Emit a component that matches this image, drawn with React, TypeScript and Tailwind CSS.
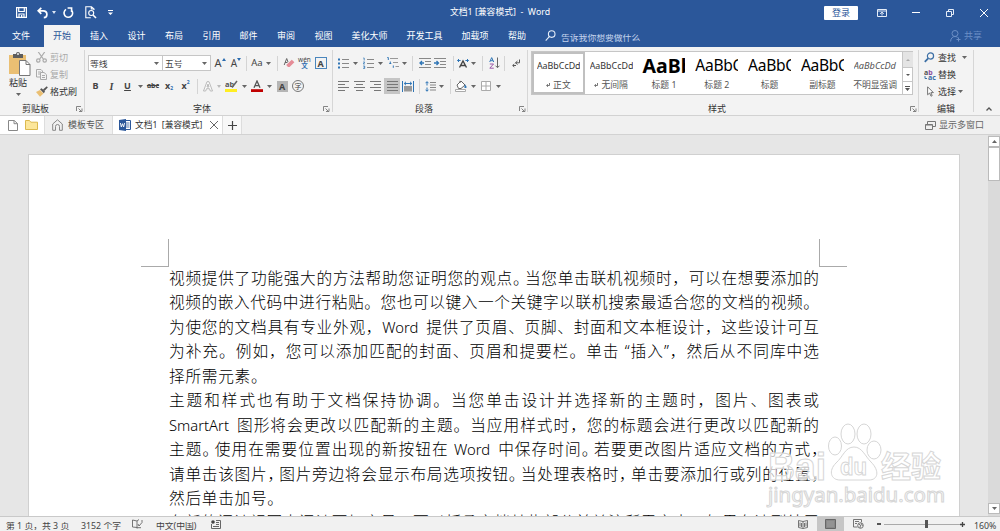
import React from "react";

type P = { className?: string; children?: React.ReactNode };

const Cell = ({ className = "", children }: P) => (
  <div className={"flex h-full shrink-0 items-center justify-center " + className}>{children}</div>
);

const Caret = ({ className = "" }: P) => (
  <Cell className={className}>
    <svg width="5" height="3" viewBox="0 0 5 3"><path d="M0 0h5L2.5 3z" fill="#666" /></svg>
  </Cell>
);

const Sep = ({ className = "" }: P) => (
  <Cell className={className}><div className="h-[15px] w-px bg-[#d4d4d4]" /></Cell>
);

const Launcher = () => (
  <svg width="7" height="6" viewBox="0 0 7 6" fill="none" stroke="#777" strokeWidth="0.9">
    <path d="M.5 5V.5h4.5M2.5 2.5l3 3M6 2.5v3H3" />
  </svg>
);

const GroupLabel = ({ className = "", children }: P) => (
  <div className={"flex h-[13px] shrink-0 items-center text-[9px] leading-[13px] text-[#333] " + className}>{children}</div>
);

const Divider = () => <div className="mt-[3px] h-[62px] w-px shrink-0 bg-[#d6d6d6]" />;

const tabs: [string, string][] = [
  ["插入", "w-[38px]"], ["设计", "w-[37px]"], ["布局", "w-[38px]"], ["引用", "w-[37px]"], ["邮件", "w-[37px]"],
  ["审阅", "w-[38px]"], ["视图", "w-[37px]"], ["美化大师", "w-[55px]"], ["开发工具", "w-[55px]"], ["加载项", "w-[46px]"], ["帮助", "w-[38px]"],
];

function TitleBar() {
  return (
    <div className="flex h-[25px] shrink-0 items-center text-white">
      <div className="flex w-[420px] items-center pl-4">
        <svg width="11" height="11" viewBox="0 0 11 11" fill="none" stroke="#fff" strokeWidth="1.2"><path d="M.6.6h9.8v9.8H.6zM2.7.8v3.7h5.6V.8M3 10.2V7h5v3.2" /><path d="M5 8h1.3v2H5z" fill="#fff" stroke="none" /></svg>
        <svg className="ml-2.5" width="11" height="12" viewBox="0 0 11 12" fill="none" stroke="#fff" strokeWidth="1.7"><path d="M4.3.8L1.2 3.8l3.1 3M1.5 3.8h4.7c4.8 0 4.8 6.6.6 6.8" /></svg>
        <svg className="ml-1" width="4" height="3" viewBox="0 0 4 3"><path d="M0 0h4L2 3z" fill="#dce6f5" /></svg>
        <svg className="ml-[7px]" width="11" height="12" viewBox="0 0 11 12" fill="none" stroke="#fff" strokeWidth="1.6"><path d="M3 2.4a4.3 4.3 0 1 0 5.2.4M4.6 1h4v4.1" /></svg>
        <svg className="ml-[11px]" width="12" height="13" viewBox="0 0 12 13" fill="none" stroke="#fff" strokeWidth="1.1"><path d="M9 4V3L6.5.7H.8v11h5M6.3.8V3H9" /><circle cx="6.2" cy="7" r="2.5" /><path d="M8 9l3 3" strokeWidth="1.6" /></svg>
        <svg className="ml-[11px]" width="5" height="6" viewBox="0 0 5 6" fill="#fff"><path d="M0 0h5v1H0zM0 2.5h5L2.5 5z" /></svg>
      </div>
      <div className="w-[160px] pl-[30px] text-[8.8px] whitespace-nowrap"><span>文档1 [兼容模式]</span><span>&nbsp; -&nbsp; Word</span></div>
      <div className="ml-[244px] flex h-3.5 w-[34px] items-center justify-center rounded-[1px] bg-white text-[9px] text-[#2b579a]">登录</div>
      <svg className="ml-[19px]" width="10" height="8" viewBox="0 0 10 8" fill="none" stroke="#e5edf8"><path d="M.5.5h9v7h-9zM.5 2h9M5 6.5V3.5M3.2 4.8L5 3.2l1.8 1.6" /></svg>
      <div className="ml-[25px] h-px w-2 bg-white" />
      <svg className="ml-[26px]" width="8" height="8" viewBox="0 0 8 8" fill="none" stroke="#e5edf8"><path d="M.5 2.5h5v5h-5zM2.5 2V.5h5v5H6" /></svg>
      <svg className="ml-[26px]" width="8" height="8" viewBox="0 0 8 8" stroke="#fff"><path d="M0 0l8 8M8 0L0 8" /></svg>
    </div>
  );
}

function TabRow() {
  return (
    <div className="flex h-[22px] shrink-0 text-[9px] text-white">
      <Cell className="w-[44px] pr-0.5">文件</Cell>
      <Cell className="w-9 bg-[#f3f3f3] text-[#2b579a]">开始</Cell>
      {tabs.map(([t, w]) => <Cell key={t} className={w}>{t}</Cell>)}
      <svg className="mt-[5px] ml-[9px]" width="11" height="12" viewBox="0 0 11 12" fill="none" stroke="#e5edf8" strokeWidth="1.1"><circle cx="6.7" cy="4.1" r="3.3" /><path d="M4.3 6.6L.7 10.6" /></svg>
      <div className="mt-[9px] ml-[5px] h-[8px] w-[80px] overflow-hidden text-[8.8px] leading-[8px] whitespace-nowrap text-[#c3d3ec]">告诉我你想要做什么</div>
      <div className="ml-auto flex items-center pr-[18px] text-[#6c8fc6]">
        <svg width="11" height="12" viewBox="0 0 11 12" fill="none" stroke="#6c8fc6"><circle cx="5" cy="3.5" r="3" /><path d="M.6 11.5C.6 8 3 6.5 5 6.5c1 0 2 .4 2.7 1M8.5 7.5v4M6.5 9.5h4" /></svg>
        <span className="ml-[3px]">共享</span>
      </div>
    </div>
  );
}

function Clipboard() {
  return (
    <div className="flex w-[84px] shrink-0 flex-col">
      <div className="flex h-[55px]">
        <div className="flex w-9 flex-col items-center pt-[5px] text-[9px] text-[#333]">
          <svg className="ml-1" width="22" height="24" viewBox="0 0 22 24"><path d="M0 3h17v19H0z" fill="#eabf73" /><path d="M4 2h3a2 2 0 0 1 4 0h3v4H4z" fill="#5d5d5d" /><circle cx="9" cy="2" r=".9" fill="#fff" /><path d="M10.5 8.5h6.5l4 4v11H10.5z" fill="#fff" stroke="#777" /><path d="M17 8.5v4h4" fill="none" stroke="#777" /></svg>
          <span className="leading-[13px]">粘贴</span>
          <svg className="mt-1" width="5" height="3" viewBox="0 0 5 3"><path d="M0 0h5L2.5 3z" fill="#666" /></svg>
        </div>
        <div className="flex flex-col pt-0.5 text-[9px] whitespace-nowrap">
          <div className="flex h-[17px] items-center text-[#a9a9a9]">
            <svg width="11" height="11" viewBox="0 0 11 11" fill="none" stroke="#aaa" strokeWidth="1.2"><path d="M2.3 0l5 7M8.7 0l-5 7" /><circle cx="2.3" cy="8.5" r="1.7" /><circle cx="8.7" cy="8.5" r="1.7" /></svg>
            <span className="ml-[3px]">剪切</span>
          </div>
          <div className="flex h-[17px] items-center text-[#a9a9a9]">
            <svg width="11" height="11" viewBox="0 0 11 11" fill="#f3f3f3" stroke="#aaa"><path d="M.5.5H5L6.5 2v6h-6zM2 3h3M2 5h3" /><path d="M4.5 3.5H8l2.5 2.2v4.8h-6zM6 6.5h3M6 8.5h3" /></svg>
            <span className="ml-[3px]">复制</span>
          </div>
          <div className="flex h-[17px] items-center text-[#333]">
            <svg width="12" height="11" viewBox="0 0 12 11"><path d="M0 6l4-2 3.5 3.5L4 10.8z" fill="#eabf73" /><path d="M4 3.2l1.6-1L9 5.6l-1.2 1.6z" fill="#555" /><path d="M7 3.6L10.8.2l1 1.2L8.4 5z" fill="#555" /></svg>
            <span className="ml-0.5">格式刷</span>
          </div>
        </div>
      </div>
      <GroupLabel className="pl-[22px]"><span className="w-[27px] whitespace-nowrap">剪贴板</span><span className="ml-[27px]"><Launcher /></span></GroupLabel>
    </div>
  );
}

function FontGroup() {
  return (
    <div className="flex w-[247px] shrink-0 flex-col">
      <div className="mt-2 flex h-4 pl-[3px] text-[#444]">
        <div className="flex w-[75px] items-center justify-between border border-[#c6c6c6] bg-white px-px">
          <span className="mt-px h-[8px] overflow-hidden text-[8.8px] leading-[8px]">等线</span><Caret className="w-[9px]" />
        </div>
        <div className="flex w-[48px] items-center justify-between border border-l-0 border-[#c6c6c6] bg-white px-0.5">
          <span className="mt-px h-[8px] overflow-hidden text-[8.8px] leading-[8px]">五号</span><Caret className="w-[7px]" />
        </div>
        <Cell className="w-[18px]"><span className="text-[11px]">A</span><svg className="-mt-2" width="4" height="3" viewBox="0 0 4 3"><path d="M0 3h4L2 0z" fill="#2b6cb0" /></svg></Cell>
        <Cell className="w-3.5"><span className="text-[10px]">A</span><svg className="-mt-2" width="4" height="3" viewBox="0 0 4 3"><path d="M0 0h4L2 3z" fill="#2b6cb0" /></svg></Cell>
        <Sep className="w-1.5" />
        <Cell className="w-4 text-[9.5px]">Aa</Cell><Caret className="w-1.5" />
        <Sep className="w-3" />
        <Cell className="w-3"><svg width="12" height="12" viewBox="0 0 12 12"><path d="M1.2 8L3.7 1.5 5 5M2 5.5h2.5" fill="none" stroke="#666" /><path d="M4 7.3L8.8 2.8l2.6 2.5-4.8 4.6H5L3.2 8z" fill="#e58c97" /></svg></Cell>
        <Cell className="w-[19px] flex-col text-[6.5px] leading-[6px]"><span>wén</span><span className="text-[6.5px] font-bold text-[#2b6cb0]">文</span></Cell>
        <Cell className="w-[13px]"><div className="flex h-3 w-3 items-center justify-center border border-[#4a86bd] text-[9px] leading-none font-bold">A</div></Cell>
      </div>
      <div className="mt-[7px] flex h-4 pl-[3px] text-[9px] text-[#444]">
        <Cell className="w-[15px] font-bold">B</Cell>
        <Cell className="w-[17px] font-['Liberation_Serif',serif] text-[10px] font-bold italic">I</Cell>
        <Cell className="w-[15px] font-bold underline">U</Cell>
        <Caret className="w-2.5" />
        <Cell className="w-4 text-[7px] font-bold line-through">abc</Cell>
        <Cell className="w-4 font-bold">x<span className="mt-1.5 text-[5px] text-[#2b6cb0]">2</span></Cell>
        <Cell className="w-[17px] font-bold">x<span className="mb-1.5 text-[5px] text-[#2b6cb0]">2</span></Cell>
        <Sep className="w-1.5" />
        <Cell className="w-4"><svg width="10" height="11" viewBox="0 0 10 11" fill="#fafafa" stroke="#b4b4b4" strokeWidth=".9"><path d="M.5 10L4 .7h2L9.5 10H7.3l-.8-2.3h-3L2.7 10zM4 6h2L5 3z" /></svg></Cell>
        <Cell className="w-[5px]"><svg width="4" height="3" viewBox="0 0 4 3"><path d="M0 0h4L2 3z" fill="#bbb" /></svg></Cell>
        <Cell className="w-5"><svg width="13" height="12" viewBox="0 0 13 12"><text x="0" y="7" fontSize="7.5" fontWeight="bold" fill="#555">ab</text><path d="M7 7.5L12 1" stroke="#666" strokeWidth="1.5" /><path d="M0 9h12v3H0z" fill="#ffee22" /></svg></Cell>
        <Caret className="w-[7px]" />
        <Cell className="w-[18px]"><svg width="12" height="12" viewBox="0 0 12 12"><path d="M3 7.8L6 1l3 6.8M4 5.6h4" fill="none" stroke="#555" strokeWidth="1.3" /><path d="M0 9.2h12V12H0z" fill="#c00000" /></svg></Cell>
        <Caret className="w-1.5" />
        <Cell className="w-5"><div className="flex h-[11px] w-[11px] items-center justify-center bg-[#b5b5b5] text-[9px] leading-none font-bold">A</div></Cell>
        <Cell className="w-3"><div className="flex h-3 w-3 shrink-0 items-center justify-center rounded-full border border-[#777] text-[7px] leading-none">字</div></Cell>
      </div>
      <GroupLabel className="mt-2 pl-[108px]"><span className="w-5">字体</span><span className="ml-[110px]"><Launcher /></span></GroupLabel>
    </div>
  );
}

const Lines = ({ d }: { d: string }) => <svg width="11" height="10" viewBox="0 0 11 10" stroke="#777" fill="none"><path d={d} /></svg>;

function Paragraph() {
  return (
    <div className="flex w-[194px] shrink-0 flex-col">
      <div className="mt-2 flex h-4">
        <Cell className="w-5"><svg width="11" height="11" viewBox="0 0 11 11"><path d="M4 1.5h7M4 5.5h7M4 9.5h7" stroke="#888" /><path d="M0 .5h2v2H0zM0 4.5h2v2H0zM0 8.5h2v2H0z" fill="#2f75b5" /></svg></Cell>
        <Caret className="w-[5px]" />
        <Cell className="w-5"><svg width="11" height="12" viewBox="0 0 11 12"><path d="M4 2.5h7M4 6.5h7M4 10.5h7" stroke="#888" /><path d="M.3 1h.9v2.5M.2 5h1.5L.3 7h1.5M.2 9h1.5v2.5H.2M.6 10.2h1" fill="none" stroke="#2f75b5" strokeWidth=".8" /></svg></Cell>
        <Caret className="w-[5px]" />
        <Cell className="w-[19px]"><svg width="12" height="12" viewBox="0 0 12 12"><path d="M3 1.5h8M6 5.5h5M8.5 9.5H12" stroke="#999" /><path d="M.3.5h1v2.5M3.3 4.5v2.2M4.3 6.5h-2M6.3 8.5v2.3" fill="none" stroke="#2f75b5" /></svg></Cell>
        <Caret className="w-[5px]" />
        <Sep className="w-[11px]" />
        <Cell className="w-[13px]"><svg width="12" height="10" viewBox="0 0 12 10"><path d="M0 .5h12M6 3.5h6M6 6.5h6M0 9.5h12" stroke="#888" /><path d="M5 5H1.5M3 3l-2 2 2 2" fill="none" stroke="#2f75b5" strokeWidth="1.3" /></svg></Cell>
        <Cell className="w-[18px]"><svg width="12" height="10" viewBox="0 0 12 10"><path d="M0 .5h12M6 3.5h6M6 6.5h6M0 9.5h12" stroke="#888" /><path d="M0 5h4M2.5 3l2 2-2 2" fill="none" stroke="#2f75b5" strokeWidth="1.3" /></svg></Cell>
        <Sep className="w-2" />
        <Cell className="w-3"><svg width="12" height="10" viewBox="0 0 12 10" fill="none"><path d="M2.5 9.5L6 3l3.5 6.5M4 7.5h4" stroke="#444" strokeWidth="1.4" /><path d="M.6 2.5h3M2 1L.5 2.5 2 4M11.4 2.5h-3M10 1l1.5 1.5L10 4" stroke="#2f75b5" /></svg></Cell>
        <Caret className="w-2" />
        <Sep className="w-[11px]" />
        <Cell className="w-3"><svg width="11" height="12" viewBox="0 0 11 12" fill="none"><path d="M.7 5L2.7.6 4.7 5M1.5 3.7h2.4" stroke="#2f75b5" /><path d="M.8 7h3.7L.8 11.2h4" stroke="#9b59a8" /><path d="M8.5.5v10M6.5 8.7l2 2 2-2" stroke="#666" /></svg></Cell>
        <Sep className="w-[9px]" />
        <Cell className="w-3.5"><svg width="9" height="9" viewBox="0 0 9 9" fill="none" stroke="#555"><path d="M7.5.5v3.3H3.5M5.5 2l-2 1.8 2 1.7M4 6.5H.8M2.3 5L.7 6.5 2.3 8" /></svg></Cell>
      </div>
      <div className="mt-[7px] flex h-4 pl-0.5">
        <Cell className="w-4"><Lines d="M0 .5h11M0 3.5h7M0 6.5h11M0 9.5h7" /></Cell>
        <Cell className="w-4"><Lines d="M0 .5h11M2 3.5h7M0 6.5h11M2 9.5h7" /></Cell>
        <Cell className="w-[17px]"><Lines d="M0 .5h11M4 3.5h7M0 6.5h11M4 9.5h7" /></Cell>
        <Cell className="w-4 bg-[#c5c5c5]"><Lines d="M0 .5h11M0 3.5h11M0 6.5h11M0 9.5h11" /></Cell>
        <Cell className="w-4"><svg width="12" height="11" viewBox="0 0 12 11"><path d="M.5 0v11M11.5 0v11M2.5 2.5h7M4 .8L2.2 2.5 4 4.2M8 .8l1.8 1.7L8 4.2" fill="none" stroke="#2f75b5" /><path d="M2 5h8v5.5H2z" fill="#999" /></svg></Cell>
        <Sep className="w-[7px]" />
        <Cell className="w-3.5"><svg width="11" height="11" viewBox="0 0 11 11" fill="none"><path d="M5 1.5h6M5 4h6M5 6.5h6M5 9h6" stroke="#888" /><path d="M2 .8v3.7M.5 2.2L2 .7l1.5 1.5M2 6.5v3.7M.5 8.7L2 10.2l1.5-1.5" stroke="#2f75b5" /></svg></Cell>
        <Caret className="w-[9px]" />
        <Sep className="w-2" />
        <Cell className="w-3.5"><svg width="12" height="12" viewBox="0 0 12 12"><path d="M2 5l4-4 4 4-4 3.5H3.5zM5 3V.8" fill="#fff" stroke="#666" /><path d="M10 4.2c1 1.5 1.6 2 1.6 3a1.2 1.2 0 0 1-2.3 0z" fill="#2f75b5" /><path d="M.5 9.5h10v2H.5z" fill="#fff" stroke="#aaa" /></svg></Cell>
        <Caret className="w-2.5" />
        <Cell className="w-4"><svg width="10" height="10" viewBox="0 0 10 10" fill="#fff" stroke="#aaa"><path d="M.5.5h9v9h-9zM5 .5v9M.5 5h9" /></svg></Cell>
        <Caret className="w-2" />
      </div>
      <GroupLabel className="mt-2 pl-[82px]"><span className="w-5">段落</span><span className="ml-[84px]"><Launcher /></span></GroupLabel>
    </div>
  );
}

const styles: { s: string; c: string; n: string; ret?: boolean }[] = [
  { s: "AaBbCcDd", c: "text-[8.9px] text-[#333]", n: "正文", ret: true },
  { s: "AaBbCcDd", c: "text-[8.9px] text-[#333]", n: "无间隔", ret: true },
  { s: "AaBb", c: "text-[19.5px] font-bold text-black", n: "标题 1" },
  { s: "AaBbC", c: "text-[15.6px] tracking-[-0.3px] text-black", n: "标题 2" },
  { s: "AaBbC", c: "text-[15.6px] tracking-[-0.3px] text-black", n: "标题" },
  { s: "AaBbC", c: "text-[15.6px] tracking-[-0.3px] text-black", n: "副标题" },
  { s: "AaBbCcDd", c: "text-[9.2px] italic text-[#555]", n: "不明显强调" },
];

function Styles() {
  return (
    <div className="flex w-[390px] shrink-0 flex-col">
      <div className="mt-1 ml-[3px] flex h-11 w-[382px] border border-[#c6c6c6] bg-white">
        {styles.map((x, i) => (
          <div key={i} className={"flex w-[52.8px] shrink-0 flex-col items-center justify-center " + (i === 0 ? "outline-2 -outline-offset-2 outline-[#c0c0c0]" : "")}>
            <div className={"flex h-[22px] w-[43px] items-center overflow-hidden leading-none whitespace-nowrap " + x.c}>{x.s}</div>
            <div className="mt-[2px] flex h-3 items-center text-[8.8px] leading-3 whitespace-nowrap text-[#555]">
              {x.ret && <svg className="mr-[3px]" width="4" height="4" viewBox="0 0 4 4" fill="none" stroke="#555" strokeWidth=".8"><path d="M3.5 0v2.5H.8M2 1.2L.6 2.5 2 3.8" /></svg>}
              {x.n}
            </div>
          </div>
        ))}
        <div className="flex w-[11px] shrink-0 flex-col border-l border-[#c6c6c6]">
          <Cell className="h-[15px]! bg-[#e4e4e4]"><svg width="4" height="2" viewBox="0 0 4 2"><path d="M0 2h4L2 0z" fill="#aaa" /></svg></Cell>
          <Cell className="h-3.5! border-t border-[#c6c6c6]"><svg width="4" height="2" viewBox="0 0 4 2"><path d="M0 0h4L2 2z" fill="#555" /></svg></Cell>
          <Cell className="h-[13px]! border-t border-[#c6c6c6]"><svg width="5" height="5" viewBox="0 0 5 5" fill="#555"><path d="M0 0h5v1H0zM0 2h5L2.5 5z" /></svg></Cell>
        </div>
      </div>
      <GroupLabel className="mt-[7px] pl-[180px]"><span className="w-5">样式</span><span className="ml-[182px]"><Launcher /></span></GroupLabel>
    </div>
  );
}

function Editing() {
  return (
    <div className="flex w-[54px] shrink-0 flex-col">
      <div className="flex h-[55px] flex-col pt-0.5 pl-[5px] text-[9px] whitespace-nowrap text-[#333]">
        <div className="flex h-[17px] items-center"><svg width="11" height="11" viewBox="0 0 11 11" fill="none" stroke="#3c6fa5"><circle cx="6.5" cy="4" r="3.1" strokeWidth="1.2" /><path d="M4.2 6.4L.8 9.8" strokeWidth="1.8" /></svg><span className="ml-[3px]">查找</span><Caret className="w-[17px]" /></div>
        <div className="flex h-[17px] items-center"><svg width="12" height="12" viewBox="0 0 12 12"><text x="0" y="5.5" fontSize="7" fontWeight="bold" fill="#555">a<tspan fill="#8e4fa0">b</tspan></text><text x="4" y="11" fontSize="7" fontWeight="bold" fill="#3c6fa5">ac</text><path d="M1 7v2.5h2" fill="none" stroke="#3c6fa5" /></svg><span className="ml-0.5">替换</span></div>
        <div className="flex h-[17px] items-center"><svg className="ml-[3px]" width="7" height="11" viewBox="0 0 7 11" fill="#fff" stroke="#666" strokeWidth=".9"><path d="M.6.8v8l2-1.8 1.4 3.2 1.2-.6-1.3-3h2.5z" /></svg><span className="ml-1">选择</span><Caret className="w-2" /></div>
      </div>
      <GroupLabel className="pl-[18px]">编辑</GroupLabel>
    </div>
  );
}

function DocTabs() {
  return (
    <div className="flex h-[20px] shrink-0 items-stretch border-y border-[#d2d2d2] bg-[#f0f0f0] text-[9px] text-[#555]">
      <div className="flex w-[44px] items-center bg-white pl-2">
        <svg width="10" height="11" viewBox="0 0 10 11" fill="#fff" stroke="#888"><path d="M.5.5h5.7l3.3 3v7h-9zM6 .5v3.2h3.5" /></svg>
        <svg className="ml-[7px]" width="13" height="10" viewBox="0 0 13 10" fill="#fce69a" stroke="#dcb94d"><path d="M.5 9.5v-9h4l1.3 1.7h6.7v7.3z" /></svg>
      </div>
      <div className="flex w-[68px] items-center border-l border-[#ddd] pl-[7px]">
        <svg width="11" height="12" viewBox="0 0 11 12" fill="none" stroke="#888"><path d="M.7 11.3V5L5.5.8 10.3 5v6.3H7.5V7.5a2 2 0 0 0-4 0v3.8z" /></svg>
        <span className="ml-[5px]">模板专区</span>
      </div>
      <div className="flex w-[111px] items-center border-x border-[#ddd] bg-white pl-1.5 text-[#333]">
        <svg width="12" height="12" viewBox="0 0 12 12"><path d="M6 1.5h5.5v9H6z" fill="#fff" stroke="#2b579a" /><path d="M7 4h3.5M7 6h3.5M7 8h3.5" stroke="#2b579a" strokeWidth=".8" /><path d="M0 1l7-1v12l-7-1z" fill="#2b579a" /><path d="M1.4 4l.9 4L3.5 4.7 4.6 8l1-4" fill="none" stroke="#fff" strokeWidth=".9" /></svg>
        <span className="mt-px ml-[4px] w-[68px] text-[8.7px] whitespace-nowrap">文档1&nbsp; [兼容模式]</span>
        <svg className="ml-[7px] shrink-0" width="8" height="8" viewBox="0 0 8 8" stroke="#666"><path d="M0 0l8 8M8 0L0 8" /></svg>
      </div>
      <div className="flex w-[19px] items-center justify-center border-r border-[#ddd] bg-[#f8f8f8]"><svg width="9" height="9" viewBox="0 0 9 9" stroke="#444" strokeWidth="1.2"><path d="M0 4.5h9M4.5 0v9" /></svg></div>
      <div className="ml-auto flex items-center pr-4 text-[#666]">
        <svg width="11" height="9" viewBox="0 0 11 9" fill="#f0f0f0" stroke="#777"><path d="M2.5.5h8v5h-8z" /><path d="M.5 3.5h7v5h-7zM.5 4h7" /></svg>
        <span className="ml-[3px]">显示多窗口</span>
      </div>
    </div>
  );
}

const N = ({ children }: P) => <span className="-mr-[4.5px]">{children}</span>;
const Edge = ({ children }: P) => <span className="-mr-[8px]">{children}</span>;
const En = ({ children }: P) => <span className="mr-[3px] text-[14.8px]">{children}</span>;

const lines: React.ReactNode[] = [
  <>视频提供了功能强大的方法帮助您证明您的观点<N>。</N>当您单击联机视频时，可以在想要添加的</>,
  <>视频的嵌入代码中进行粘贴。您也可以键入一个关键字以联机搜索最适合您的文档的视频。</>,
  <>为使您的文档具有专业外观，<En>Word</En> 提供了页眉、页脚、封面和文本框设计，这些设计可互</>,
  <>为补充。例如，您可以添加匹配的封面、页眉和提要栏。单击 “插入”，然后从不同库中选</>,
  <>择所需元素。</>,
  <>主题和样式也有助于文档保持协调。当您单击设计并选择新的主题时，图片、图表或</>,
  <><En>SmartArt</En> 图形将会更改以匹配新的主题。当应用样式时，您的标题会进行更改以匹配新的</>,
  <>主题<N>。</N>使用在需要位置出现的新按钮在 <En>Word</En> 中保存时间<N>。</N>若要更改图片适应文档的方式<Edge>，</Edge></>,
  <>请单击该图片<N>，</N>图片旁边将会显示布局选项按钮<N>。</N>当处理表格时<N>，</N>单击要添加行或列的位置<Edge>，</Edge></>,
  <>然后单击加号。</>,
  <>在新的阅读视图中阅读更加容易。可以折叠文档某些部分并关注所需文本。如果在达到结尾</>,
];

function Watermark() {
  return (
    <svg className="absolute top-[285px] left-[766px]" width="190" height="92" viewBox="0 0 190 92" fill="#fff" fillOpacity=".7" stroke="#d6d6d6" strokeWidth="1">
      <g fontFamily="'Liberation Sans','Noto Sans CJK SC',sans-serif">
        <text x="2" y="60" fontSize="38" fontWeight="bold" textLength="58" lengthAdjust="spacingAndGlyphs">Bai</text>
        <ellipse cx="69" cy="26" rx="6.5" ry="9" /><ellipse cx="82" cy="14" rx="7" ry="10" /><ellipse cx="98" cy="14" rx="7" ry="10" /><ellipse cx="108" cy="30" rx="7" ry="9" />
        <path d="M88 27c8 0 11 9 17 15 9 9 7 18-2 18H74c-9 0-12-9-4-17 7-6 9-16 18-16z" />
        <text x="74" y="55" fontSize="24" fontWeight="bold" textLength="27" lengthAdjust="spacingAndGlyphs">du</text>
        <text x="115" y="57" fontSize="30" fontWeight="bold">经验</text>
        <text x="2" y="82" fontSize="19" fontFamily="'Noto Sans',sans-serif" textLength="177" lengthAdjust="spacingAndGlyphs">jingyan.baidu.com</text>
      </g>
    </svg>
  );
}

function Document() {
  return (
    <div className="relative flex h-[381px] shrink-0 overflow-hidden bg-[#e6e6e6] pt-[19px]">
      <div className="ml-7 h-[400px] w-[932px] shrink-0 border border-[#d0d0d0] bg-white pt-[84px]">
        <div className="flex h-7 pl-[112px]">
          <div className="w-[28px] border-r border-b border-[#aaa]" />
          <div className="ml-[650px] w-[28px] border-b border-l border-[#aaa]" />
        </div>
        <div className="-mt-px pl-[140px] font-['Noto_Sans','Noto_Sans_CJK_SC',sans-serif] text-[15.7px] text-black">
          {lines.map((l, i) => (
            <div key={i} className={"h-[24.45px] w-[650px] leading-[24.45px] font-light whitespace-nowrap " + (i === 4 || i === 9 ? "tracking-[0.7px]" : "[text-align-last:justify]")}>{l}</div>
          ))}
        </div>
      </div>
      <Watermark />
      <div className="-mt-[19px] ml-auto flex h-[381px] w-3 flex-col bg-[#dadada]">
        <div className="mt-[1px] flex h-[11px] items-center justify-center border border-[#bbb] bg-white"><svg width="5" height="3" viewBox="0 0 5 3"><path d="M0 3h5L2.5 0z" fill="#666" /></svg></div>
        <div className="h-[34px] border border-[#bbb] bg-white" />
        <div className="mt-auto mb-0.5 flex h-[11px] items-center justify-center border border-[#bbb] bg-white"><svg width="5" height="3" viewBox="0 0 5 3"><path d="M0 0h5L2.5 3z" fill="#666" /></svg></div>
      </div>
    </div>
  );
}

function StatusBar() {
  return (
    <div className="flex h-[15px] shrink-0 items-stretch overflow-hidden border-t border-[#c9c9c9] bg-[#f1f1f1] text-[8.8px] whitespace-nowrap text-[#444]">
      <div className="mt-[5px] ml-1.5 h-[8px] w-[75px] overflow-hidden leading-[8px]">第 1 页，共 3 页</div>
      <div className="mt-[5px] h-[8px] w-[51px] overflow-hidden leading-[8px]">3152 个字</div>
      <svg className="mt-0.5" width="11" height="10" viewBox="0 0 11 10" fill="none" stroke="#666" strokeWidth=".9"><path d="M5 8.5L.5 8V1L5 2v7.5M5 2l2-1.5M10 1v2.5L7 7 6 5M5 8.7h4" /></svg>
      <div className="mt-[5px] ml-[13px] h-[8px] w-[44px] overflow-hidden leading-[8px]">中文(中国)</div>
      <svg className="mt-[3px] ml-[11px]" width="10" height="9" viewBox="0 0 10 9"><path d="M.5 4v4.5h9v-8H5" fill="none" stroke="#666" /><circle cx="2" cy="2" r="1.8" fill="#444" /><path d="M5 2.5h3M5 4.5h3M2 6.5h6" stroke="#666" /></svg>
      <div className="ml-auto flex items-center">
        <svg width="10" height="9" viewBox="0 0 10 9" fill="none" stroke="#666" strokeWidth=".9"><path d="M5 1.5L.5.5v7L5 8.5l4.5-1v-7zM5 1.5v7M2 2.5v4M3.5 3v4M6.5 3v4M8 2.5v4" /></svg>
        <div className="ml-[9px] flex h-full w-[27px] items-center justify-center bg-[#c6c6c6]"><svg width="11" height="10" viewBox="0 0 11 10"><path d="M.5.5h10v9H.5z" fill="#888" stroke="#666" /><path d="M2 3h7M2 5h7M2 7h7" stroke="#aaa" strokeWidth=".7" /></svg></div>
        <svg className="ml-[9px]" width="11" height="10" viewBox="0 0 11 10" fill="none" stroke="#666" strokeWidth=".9"><path d="M4.5 8H.5V.5h8V3M2 2.5h4M2 4.5h2" /><circle cx="7.5" cy="6.5" r="2.8" /><path d="M5.5 5l2 1-.5 3M8 4l1.5 3" /></svg>
        <div className="ml-[13px] h-[1.5px] w-1 bg-[#555]" />
        <div className="ml-[3px] flex w-[76px] items-center"><div className="h-px w-[41px] bg-[#aaa]" /><div className="h-2 w-[3px] bg-[#555]" /><div className="h-px w-8 bg-[#aaa]" /></div>
        <svg width="5" height="5" viewBox="0 0 5 5" stroke="#444" strokeWidth="1.3"><path d="M0 2.5h5M2.5 0v5" /></svg>
        <div className="mt-[3px] ml-[9px] h-[8px] w-[26px] overflow-hidden leading-[9px]">160%</div>
      </div>
    </div>
  );
}

export default function App() {
  return (
    <div className="flex h-[531px] w-[1000px] flex-col overflow-hidden bg-[#f3f3f3] font-['Noto_Sans','Noto_Sans_CJK_SC',sans-serif]">
      <div className="flex h-[47px] shrink-0 flex-col bg-[#2b579a]"><TitleBar /><TabRow /></div>
      <div className="flex h-[68px] shrink-0">
        <Clipboard /><Divider /><FontGroup /><Divider /><Paragraph /><Divider /><Styles /><Divider /><Editing /><Divider />
        <div className="flex flex-1 items-end justify-center pr-0 pb-1 pl-1"><svg width="6" height="4" viewBox="0 0 6 4" fill="none" stroke="#555" strokeWidth="1.3"><path d="M.5 3.5L3 1l2.5 2.5" /></svg></div>
      </div>
      <DocTabs />
      <Document />
      <StatusBar />
    </div>
  );
}
